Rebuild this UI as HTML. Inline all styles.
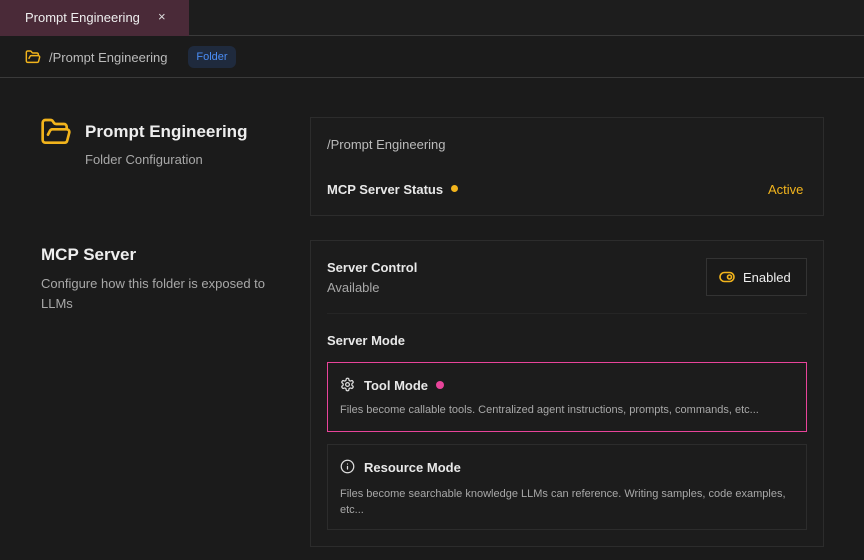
<!DOCTYPE html><html><head><style>
*{box-sizing:border-box;margin:0;padding:0}
body{width:864px;height:560px;background:#1b1b1b;font-family:"Liberation Sans",sans-serif;color:#e8e8e8;position:relative;overflow:hidden}
.a{position:absolute}
.card{position:absolute;border:1px solid #2c2c2c;background:#1c1c1c}
.t{font-size:13px;white-space:nowrap}
.g{color:#a8a8a8}
</style></head><body>
<div class="a" style="left:0;top:0;width:864px;height:36px;background:#1d1d1d;border-bottom:1px solid #3a3a3a"></div>
<div class="a" style="left:0;top:0;width:189px;height:36px;background:#4a2a38"></div>
<div class="a t" style="left:25px;top:10px;width:121px;overflow:hidden;color:#eee">Prompt Engineering</div>
<div class="a t" style="left:158px;top:9px;color:#ddd">×</div>
<div class="a" style="left:0;top:77px;width:864px;height:1px;background:#3a3a3a"></div>
<svg class="a" style="left:25px;top:49px" width="16" height="16" viewBox="0 0 24 24" fill="none" stroke="#f2b41c" stroke-width="2.2" stroke-linecap="round" stroke-linejoin="round"><path d="m6 14 1.5-2.9A2 2 0 0 1 9.24 10H20a2 2 0 0 1 1.94 2.5l-1.54 6a2 2 0 0 1-1.95 1.5H4a2 2 0 0 1-2-2V5a2 2 0 0 1 2-2h3.9a2 2 0 0 1 1.69.9l.81 1.2a2 2 0 0 0 1.67.9H18a2 2 0 0 1 2 2v2"/></svg>
<div class="a t g" style="left:49px;top:50px;color:#bbb">/Prompt Engineering</div>
<div class="a" style="left:188px;top:46px;width:48px;height:22px;border-radius:6px;background:#1f2a3d;color:#4b8df5;font-size:11px;text-align:center;line-height:22px">Folder</div>
<svg class="a" style="left:40px;top:116px" width="32" height="32" viewBox="0 0 24 24" fill="none" stroke="#f2b41c" stroke-width="2" stroke-linecap="round" stroke-linejoin="round"><path d="m6 14 1.5-2.9A2 2 0 0 1 9.24 10H20a2 2 0 0 1 1.94 2.5l-1.54 6a2 2 0 0 1-1.95 1.5H4a2 2 0 0 1-2-2V5a2 2 0 0 1 2-2h3.9a2 2 0 0 1 1.69.9l.81 1.2a2 2 0 0 0 1.67.9H18a2 2 0 0 1 2 2v2"/></svg>
<div class="a" style="left:85px;top:122px;font-size:17px;font-weight:bold;color:#eee">Prompt Engineering</div>
<div class="a t g" style="left:85px;top:152px">Folder Configuration</div>
<div class="card" style="left:310px;top:117px;width:514px;height:99px"></div>
<div class="a t g" style="left:327px;top:137px;color:#bbb">/Prompt Engineering</div>
<div class="a t" style="left:327px;top:182px;font-weight:bold;color:#e8e8e8">MCP Server Status</div>
<div class="a" style="left:451px;top:185px;width:7px;height:7px;border-radius:50%;background:#f2b41c"></div>
<div class="a t" style="left:768px;top:182px;color:#f2b41c">Active</div>
<div class="a" style="left:41px;top:245px;font-size:17px;font-weight:bold;color:#eee">MCP Server</div>
<div class="a g" style="left:41px;top:274px;font-size:13px;line-height:20px;width:250px">Configure how this folder is exposed to LLMs</div>
<div class="card" style="left:310px;top:240px;width:514px;height:307px"></div>
<div class="a t" style="left:327px;top:260px;font-weight:bold">Server Control</div>
<div class="a t g" style="left:327px;top:280px">Available</div>
<div class="a" style="left:706px;top:258px;width:101px;height:38px;border:1px solid #333;background:#1a1a1a"></div>
<svg class="a" style="left:719px;top:270px" width="16" height="14" viewBox="0 0 16 14" fill="none" stroke="#f2b41c" stroke-width="1.6"><rect x="1" y="2.5" width="14" height="9" rx="4.5"/><circle cx="10.5" cy="7" r="2"/></svg>
<div class="a t" style="left:743px;top:270px;color:#eee">Enabled</div>
<div class="a" style="left:327px;top:313px;width:480px;height:1px;background:#252525"></div>
<div class="a t" style="left:327px;top:333px;font-weight:bold">Server Mode</div>
<div class="a" style="left:327px;top:362px;width:480px;height:70px;border:1px solid #e8449a;background:#1c1c1c"></div>
<svg class="a" style="left:340px;top:377px" width="15" height="15" viewBox="0 0 24 24" fill="none" stroke="#ddd" stroke-width="2" stroke-linecap="round" stroke-linejoin="round"><path d="M12.22 2h-.44a2 2 0 0 0-2 2v.18a2 2 0 0 1-1 1.73l-.43.25a2 2 0 0 1-2 0l-.15-.08a2 2 0 0 0-2.73.73l-.22.38a2 2 0 0 0 .73 2.73l.15.1a2 2 0 0 1 1 1.72v.51a2 2 0 0 1-1 1.74l-.15.09a2 2 0 0 0-.73 2.73l.22.38a2 2 0 0 0 2.73.73l.15-.08a2 2 0 0 1 2 0l.43.25a2 2 0 0 1 1 1.73V20a2 2 0 0 0 2 2h.44a2 2 0 0 0 2-2v-.18a2 2 0 0 1 1-1.73l.43-.25a2 2 0 0 1 2 0l.15.08a2 2 0 0 0 2.73-.73l.22-.39a2 2 0 0 0-.73-2.73l-.15-.08a2 2 0 0 1-1-1.74v-.5a2 2 0 0 1 1-1.74l.15-.09a2 2 0 0 0 .73-2.73l-.22-.38a2 2 0 0 0-2.73-.73l-.15.08a2 2 0 0 1-2 0l-.43-.25a2 2 0 0 1-1-1.73V4a2 2 0 0 0-2-2z"/><circle cx="12" cy="12" r="3"/></svg>
<div class="a t" style="left:364px;top:378px;font-weight:bold">Tool Mode</div>
<div class="a" style="left:436px;top:381px;width:8px;height:8px;border-radius:50%;background:#e8449a"></div>
<div class="a g" style="left:340px;top:404px;font-size:11px;white-space:nowrap">Files become callable tools. Centralized agent instructions, prompts, commands, etc...</div>
<div class="a" style="left:327px;top:444px;width:480px;height:86px;border:1px solid #2c2c2c;background:#1c1c1c"></div>
<svg class="a" style="left:340px;top:459px" width="15" height="15" viewBox="0 0 24 24" fill="none" stroke="#ddd" stroke-width="2" stroke-linecap="round"><circle cx="12" cy="12" r="10"/><path d="M12 16v-4M12 8h.01"/></svg>
<div class="a t" style="left:364px;top:460px;font-weight:bold">Resource Mode</div>
<div class="a g" style="left:340px;top:486px;font-size:11px;line-height:16px;width:460px">Files become searchable knowledge LLMs can reference. Writing samples, code examples, etc...</div>
</body></html>
